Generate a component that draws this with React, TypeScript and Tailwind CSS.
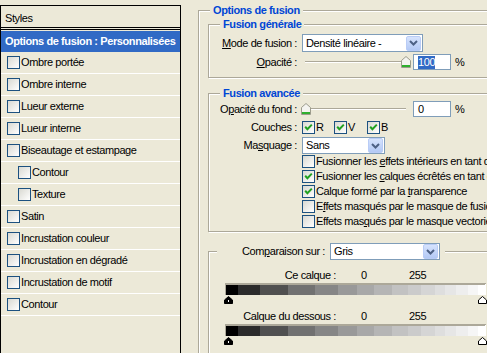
import React from "react";

const CB = ({ checked = false }: { checked?: boolean }) => (
  <span className="inline-flex w-[13px] h-[13px] shrink-0 items-center justify-center border border-[#1c5180] bg-linear-to-br from-[#d9d9d2] to-white">
    {checked && (
      <svg width="9" height="9" viewBox="0 0 9 9">
        <path d="M1.2 3.8 L3.4 6.2 L7.8 1.6" stroke="#21a121" strokeWidth="2" fill="none" />
      </svg>
    )}
  </span>
);

const Chevron = () => (
  <svg width="9" height="6" viewBox="0 0 9 6">
    <path d="M1 1 L4.5 4.5 L8 1" stroke="#4d6185" strokeWidth="2" fill="none" />
  </svg>
);

const DropBtn = () => (
  <span className="ml-auto mr-[1px] flex h-[15px] w-[15px] items-center justify-center rounded-[2px] border border-[#b9ccf6] bg-linear-to-b from-[#d6e3fd] to-[#b3c9f5]">
    <Chevron />
  </span>
);

const Thumb = () => (
  <svg width="10" height="12" viewBox="0 0 10 12">
    <path d="M0.5 4.5 L5 0.5 L9.5 4.5 L9.5 11.5 L0.5 11.5 Z" fill="#f4f4f0" stroke="#9c9c8c" />
    <rect x="1" y="9" width="8" height="2" fill="#2fb02f" />
  </svg>
);

const Slider = ({ atEnd }: { atEnd: boolean }) => (
  <div className="relative h-[14px] w-[112px]">
    <div className="absolute left-[5px] right-[6px] top-[6px] h-[2px] border-t border-[#aca899] bg-white" />
    <div className={atEnd ? "absolute right-[1px] top-[1px]" : "absolute left-[1px] top-[1px]"}>
      <Thumb />
    </div>
  </div>
);

const segs: [string, number][] = [
  ["#000000", 12],
  ["#2b2b2b", 22],
  ["#505050", 28],
  ["#717171", 27],
  ["#868686", 23],
  ["#999999", 19],
  ["#a8a8a8", 17],
  ["#b5b5b5", 18],
  ["#c2c2c2", 16],
  ["#cbcbcb", 13],
  ["#d5d5d5", 14],
  ["#dedede", 10],
  ["#e6e6e6", 11],
  ["#eeeeee", 12],
  ["#f6f6f6", 10],
  ["#ffffff", 7],
];

const Bar = () => {
  let x = 1;
  return (
    <svg width="262" height="12" viewBox="0 0 262 12" className="block">
      <rect x="0" y="0" width="261" height="12" fill="#aca899" />
      {segs.map(([c, w], i) => {
        const r = <rect key={i} x={x} y={2} width={w} height={10} fill={c} />;
        x += w;
        return r;
      })}
      <rect x="260" y="1" width="1" height="11" fill="#ffffff" />
    </svg>
  );
};

const Markers = () => (
  <svg width="264" height="8" viewBox="0 0 264 8" className="-ml-[1px] block">
    <path d="M0.5 7.5 L0.5 4 L4.5 0.5 L8.5 4 L8.5 7.5 Z" fill="#000" stroke="#000" />
    <rect x="4" y="4" width="1" height="2" fill="#fff" />
    <path d="M254.5 7.5 L254.5 4 L258.5 0.5 L262.5 4 L262.5 7.5 Z" fill="#fff" stroke="#000" />
  </svg>
);

const U = ({ c }: { c: string }) => <span className="underline underline-offset-[1px]">{c}</span>;

const leftRows: { label: string; indent?: boolean }[] = [
  { label: "Ombre portée" },
  { label: "Ombre interne" },
  { label: "Lueur externe" },
  { label: "Lueur interne" },
  { label: "Biseautage et estampage" },
  { label: "Contour", indent: true },
  { label: "Texture", indent: true },
  { label: "Satin" },
  { label: "Incrustation couleur" },
  { label: "Incrustation en dégradé" },
  { label: "Incrustation de motif" },
  { label: "Contour" },
];

const fs = "border border-[#aca899] shadow-[inset_1px_1px_0_#fff,1px_1px_0_#fff] min-w-0";

export default function App() {
  return (
    <div className="flex h-[353px] w-[487px] overflow-hidden bg-[#ece9d8] font-['Liberation_Sans',Arial,sans-serif] text-[11px] leading-[13px] tracking-[-0.4px] text-black">
      {/* Left panel */}
      <div className="mt-[5px] flex w-[181px] shrink-0 flex-col border-l border-r border-t border-black">
        <div className="flex h-[22px] items-center border-b border-black pl-[4px] pt-[3px]">Styles</div>
        <div className="h-[1px]" />
        <div className="h-[1px] bg-black" />
        <div className="h-[1px]" />
        <div className="flex h-[21px] items-center bg-[#316ac5] pl-[4px] font-bold text-white">
          Options de fusion : Personnalisées
        </div>
        {leftRows.map((r, i) => (
          <div
            key={i}
            className={
              r.indent
                ? "flex h-[22px] items-center gap-[1px] border-b border-white pl-[17px]"
                : "flex h-[22px] items-center gap-[1px] border-b border-white pl-[6px]"
            }
          >
            <CB />
            <span>{r.label}</span>
          </div>
        ))}
      </div>

      {/* Right panel */}
      <div className="ml-[17px] mt-[4px] w-[300px] shrink-0">
        <fieldset className={fs + " pb-[40px] pl-[9px]"}>
          <legend className="ml-[2px] bg-[#ece9d8] px-[3px] font-bold text-[#0046d5]">Options de fusion</legend>

          {/* Fusion générale */}
          <fieldset className={fs + " mt-[1px]"}>
            <legend className="ml-[11px] bg-[#ece9d8] px-[3px] font-bold text-[#0046d5]">Fusion générale</legend>
            <div className="flex flex-col gap-[2px] pb-[7px] pt-[3px]">
              <div className="flex h-[18px] items-center">
                <div className="w-[88px] text-right">
                  <U c="M" />ode de fusion :
                </div>
                <div className="ml-[5px] flex h-[18px] w-[121px] items-center border border-[#7f9db9] bg-white pl-[3px]">
                  <span>Densité linéaire -</span>
                  <DropBtn />
                </div>
              </div>
              <div className="flex h-[16px] items-center">
                <div className="w-[88px] text-right">
                  <U c="O" />pacité :
                </div>
                <div className="ml-[3px]">
                  <Slider atEnd />
                </div>
                <div className="ml-[1px] flex h-[16px] w-[38px] items-center border border-[#7f9db9] bg-white pl-[4px]">
                  <span className="bg-[#316ac5] text-white">100</span>
                </div>
                <span className="ml-[4px]">%</span>
              </div>
            </div>
          </fieldset>

          {/* Fusion avancée */}
          <fieldset className={fs + " mt-[9px]"}>
            <legend className="ml-[11px] bg-[#ece9d8] px-[3px] font-bold text-[#0046d5]">Fusion avancée</legend>
            <div className="flex flex-col pb-[2px] pt-[1px]">
              <div className="flex h-[16px] items-center">
                <div className="w-[88px] text-right">
                  O<U c="p" />acité du fond :
                </div>
                <div className="ml-[3px]">
                  <Slider atEnd={false} />
                </div>
                <div className="ml-[1px] flex h-[16px] w-[38px] items-center border border-[#7f9db9] bg-white pl-[4px]">
                  0
                </div>
                <span className="ml-[4px]">%</span>
              </div>
              <div className="mt-[4px] flex h-[13px] items-center">
                <div className="w-[88px] text-right">Couches :</div>
                <div className="ml-[5px] flex w-[32px] items-center gap-[1px]">
                  <CB checked />
                  <span>R</span>
                </div>
                <div className="flex w-[33px] items-center gap-[1px]">
                  <CB checked />
                  <span>V</span>
                </div>
                <div className="flex items-center gap-[1px]">
                  <CB checked />
                  <span>B</span>
                </div>
              </div>
              <div className="mt-[3px] flex h-[17px] items-center">
                <div className="w-[88px] text-right">
                  Ma<U c="s" />quage :
                </div>
                <div className="ml-[5px] flex h-[17px] w-[83px] items-center border border-[#7f9db9] bg-white pl-[3px]">
                  <span>Sans</span>
                  <DropBtn />
                </div>
              </div>
              <div className="ml-[93px] flex flex-col whitespace-nowrap">
                <div className="flex h-[15px] items-center gap-[1px]">
                  <CB />
                  <span>
                    Fusionner les <U c="e" />ffets intérieurs en tant que groupe
                  </span>
                </div>
                <div className="flex h-[15px] items-center gap-[1px]">
                  <CB checked />
                  <span>
                    Fusionner les <U c="c" />alques écrêtés en tant que groupe
                  </span>
                </div>
                <div className="flex h-[15px] items-center gap-[1px]">
                  <CB checked />
                  <span>
                    Calque formé par la <U c="t" />ransparence
                  </span>
                </div>
                <div className="flex h-[15px] items-center gap-[1px]">
                  <CB />
                  <span>
                    E<U c="f" />fets masqués par le masque de fusion
                  </span>
                </div>
                <div className="flex h-[15px] items-center gap-[1px]">
                  <CB />
                  <span>
                    Effets mas<U c="q" />ués par le masque vectoriel
                  </span>
                </div>
              </div>
            </div>
          </fieldset>

          {/* Blend if */}
          <fieldset className={fs + " mt-[11px] pb-[20px] pl-[16px]"}>
            <legend className="ml-[-8px] flex h-[17px] items-center bg-[#ece9d8] pr-[5px]">
              <span className="w-[108px] text-right">
                Com<U c="p" />araison sur :
              </span>
              <span className="ml-[5px] flex h-[17px] w-[110px] items-center border border-[#7f9db9] bg-white pl-[3px]">
                <span>Gris</span>
                <DropBtn />
              </span>
            </legend>
            <div className="mt-[9px] flex h-[13px] items-center">
              <span className="w-[111px] text-right">Ce calque :</span>
              <span className="ml-[25px] w-[48px]">0</span>
              <span>255</span>
            </div>
            <div className="mt-[1px]">
              <Bar />
            </div>
            <div className="mt-[1px]">
              <Markers />
            </div>
            <div className="mt-[6px] flex h-[13px] items-center">
              <span className="w-[111px] text-right">Calque du dessous :</span>
              <span className="ml-[25px] w-[48px]">0</span>
              <span>255</span>
            </div>
            <div className="mt-[1px]">
              <Bar />
            </div>
            <div className="mt-[1px]">
              <Markers />
            </div>
          </fieldset>
        </fieldset>
      </div>
    </div>
  );
}
